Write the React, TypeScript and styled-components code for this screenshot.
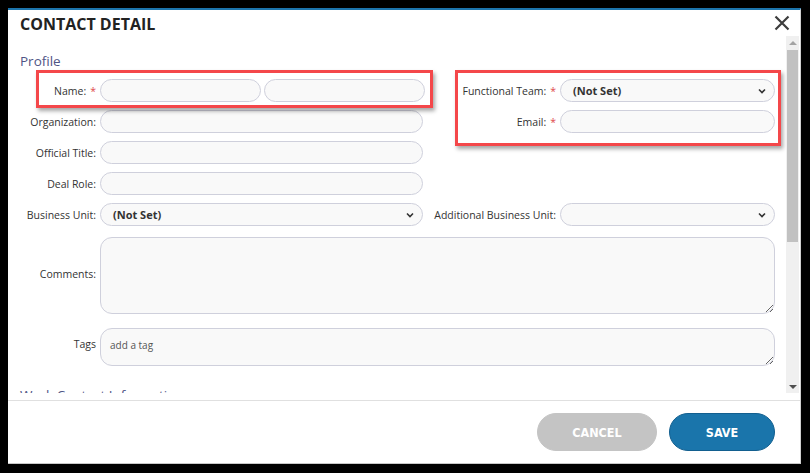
import React from "react"
import styled, { createGlobalStyle } from "styled-components"

const GlobalStyle = createGlobalStyle`
  html, body {
    margin: 0;
    padding: 0;
    background: #000;
    font-family: "Open Sans", "Liberation Sans", sans-serif;
  }
  * { box-sizing: border-box; }
`

const Chevron = () => (
  <svg width="8" height="6" viewBox="0 0 8 6">
    <path d="M1 1.5 L4 4.5 L7 1.5" fill="none" stroke="#333" strokeWidth="1.6" />
  </svg>
)

const CloseIcon = () => (
  <svg width="16" height="16" viewBox="0 0 16 16">
    <path d="M1.5 1.5 L14.5 14.5 M14.5 1.5 L1.5 14.5" stroke="#3d3d3d" strokeWidth="2.2" />
  </svg>
)

type SelectProps = { value?: string }

const Select: React.FC<SelectProps> = ({ value }) => (
  <S.Select>
    <span>{value}</span>
    <Chevron />
  </S.Select>
)

type FieldLabelProps = { text: string; required?: boolean }

const FieldLabel: React.FC<FieldLabelProps> = ({ text, required }) => (
  <S.Label>
    {text}
    {required && <S.Star>*</S.Star>}
  </S.Label>
)

export default function App() {
  return (
    <>
      <GlobalStyle />
      <S.Dialog>
        <S.Header>
          <S.Title>CONTACT DETAIL</S.Title>
          <S.CloseButton>
            <CloseIcon />
          </S.CloseButton>
        </S.Header>

        <S.ScrollArea>
          <S.Content>
            <S.SectionTitle>Profile</S.SectionTitle>
            <S.Form>
              <S.Highlight $left={16} $top={-9} $width={397} $height={38} />
              <S.Highlight $left={435} $top={-9} $width={326} $height={76} />

              <FieldLabel text="Name:" required />
              <S.NamePair>
                <S.Input />
                <S.Input />
              </S.NamePair>
              <FieldLabel text="Functional Team:" required />
              <Select value="(Not Set)" />

              <FieldLabel text="Organization:" />
              <S.Input />
              <FieldLabel text="Email:" required />
              <S.Input />

              <FieldLabel text="Official Title:" />
              <S.Input />
              <S.Empty />

              <FieldLabel text="Deal Role:" />
              <S.Input />
              <S.Empty />

              <FieldLabel text="Business Unit:" />
              <Select value="(Not Set)" />
              <FieldLabel text="Additional Business Unit:" />
              <Select />

              <FieldLabel text="Comments:" />
              <S.TextArea $height={77} $offset={3} />

              <FieldLabel text="Tags" />
              <S.TextArea $height={38} $offset={6} placeholder="add a tag" />
            </S.Form>

            <S.SectionTitle $gap={20}>Work Contact Information</S.SectionTitle>
          </S.Content>

          <S.ScrollBar>
            <S.ScrollButton>
              <S.Arrow $dir="up" />
            </S.ScrollButton>
            <S.ScrollThumb />
            <S.ScrollFill />
            <S.ScrollButton>
              <S.Arrow $dir="down" />
            </S.ScrollButton>
          </S.ScrollBar>
        </S.ScrollArea>

        <S.Footer>
          <S.Button $variant="cancel">CANCEL</S.Button>
          <S.Button $variant="save">SAVE</S.Button>
        </S.Footer>
      </S.Dialog>
    </>
  )
}

const fieldBase = `
  height: 23px;
  border: 1px solid #cfd0dc;
  border-radius: 12px;
  background: #f9f9f9;
  font-family: "Open Sans", "Liberation Sans", sans-serif;
  font-size: 11px;
  color: #333;
  outline: none;
`

const S = {
  Dialog: styled.div`
    margin: 8px 0 0 8px;
    width: 793px;
    height: 456px;
    background: #fff;
    border-top: 2px solid #1c75ad;
    border-right: 1px solid #d0d0d0;
    border-bottom: 1px solid #c8c8c8;
    display: flex;
    flex-direction: column;
  `,
  Header: styled.div`
    height: 26px;
    flex: none;
    display: flex;
    align-items: flex-start;
    justify-content: space-between;
    padding: 2px 10px 0 12px;
  `,
  Title: styled.h1`
    margin: 0;
    font-size: 16px;
    line-height: 24px;
    font-weight: 700;
    color: #222;
  `,
  CloseButton: styled.div`
    display: flex;
    padding-top: 3px;
  `,
  ScrollArea: styled.div`
    height: 357px;
    flex: none;
    display: flex;
    margin-right: 1px;
  `,
  Content: styled.div`
    flex: 1;
    overflow: hidden;
    padding: 16px 11px 0 12px;
  `,
  ScrollBar: styled.div`
    width: 13px;
    flex: none;
    display: flex;
    flex-direction: column;
    background: #f0f0f0;
  `,
  ScrollButton: styled.div`
    height: 13px;
    flex: none;
    display: flex;
    align-items: center;
    justify-content: center;
  `,
  Arrow: styled.div<{ $dir: "up" | "down" }>`
    width: 0;
    height: 0;
    border-left: 4px solid transparent;
    border-right: 4px solid transparent;
    ${(p) =>
      p.$dir === "up"
        ? "border-bottom: 4px solid #a3a3a3;"
        : "border-top: 4px solid #505050;"}
  `,
  ScrollThumb: styled.div`
    height: 192px;
    margin: 1px 1px 0;
    flex: none;
    background: #c1c1c1;
  `,
  ScrollFill: styled.div`
    flex: 1;
  `,
  SectionTitle: styled.div<{ $gap?: number }>`
    font-size: 13.5px;
    line-height: 18px;
    color: #4f5485;
    margin-top: ${(p) => p.$gap ?? 0}px;
    margin-bottom: 9px;
    white-space: nowrap;
  `,
  Form: styled.div`
    position: relative;
    display: grid;
    grid-template-columns: 76px 323px 129px 215px;
    column-gap: 4px;
    row-gap: 8px;
    align-items: center;
  `,
  Highlight: styled.div<{ $left: number; $top: number; $width: number; $height: number }>`
    position: absolute;
    left: ${(p) => p.$left}px;
    top: ${(p) => p.$top}px;
    width: ${(p) => p.$width}px;
    height: ${(p) => p.$height}px;
    border: 3px solid #f4474a;
    box-shadow: 2px 3px 4px rgba(0, 0, 0, 0.35);
    pointer-events: none;
  `,
  Label: styled.label`
    font-size: 10.5px;
    color: #333;
    text-align: right;
    white-space: nowrap;
  `,
  Star: styled.span`
    color: #e0474c;
    margin-left: 4px;
  `,
  NamePair: styled.div`
    display: flex;
    gap: 3px;
    width: 325px;
  `,
  Input: styled.input`
    ${fieldBase}
    width: 100%;
    min-width: 0;
    padding: 0 12px;
  `,
  Select: styled.div`
    ${fieldBase}
    display: flex;
    align-items: center;
    justify-content: space-between;
    padding: 0 8px 0 12px;
    font-weight: 700;
  `,
  TextArea: styled.textarea<{ $height: number; $offset: number }>`
    ${fieldBase}
    grid-column: 2 / 5;
    height: ${(p) => p.$height}px;
    margin-top: ${(p) => p.$offset}px;
    padding: 9px 9px;
    resize: vertical;
    font-size: 10px;
    &::placeholder {
      color: #555;
    }
  `,
  Empty: styled.div`
    grid-column: 3 / 5;
  `,
  Footer: styled.div`
    flex: 1;
    margin-top: 7px;
    border-top: 1px solid #e0e0e0;
    display: flex;
    align-items: center;
    justify-content: flex-end;
    gap: 12px;
    padding-right: 25px;
  `,
  Button: styled.button<{ $variant: "cancel" | "save" }>`
    height: 38px;
    width: ${(p) => (p.$variant === "cancel" ? 120 : 106)}px;
    border-radius: 19px;
    border: 1px solid ${(p) => (p.$variant === "cancel" ? "#c4c4c4" : "#125f8f")};
    background: ${(p) => (p.$variant === "cancel" ? "#c4c4c4" : "#1a75ab")};
    color: #fff;
    font-family: "Liberation Sans Narrow", "DejaVu Sans Condensed", "Liberation Sans", sans-serif;
    font-stretch: condensed;
    font-weight: 700;
    font-size: 12.5px;
  `,
}
